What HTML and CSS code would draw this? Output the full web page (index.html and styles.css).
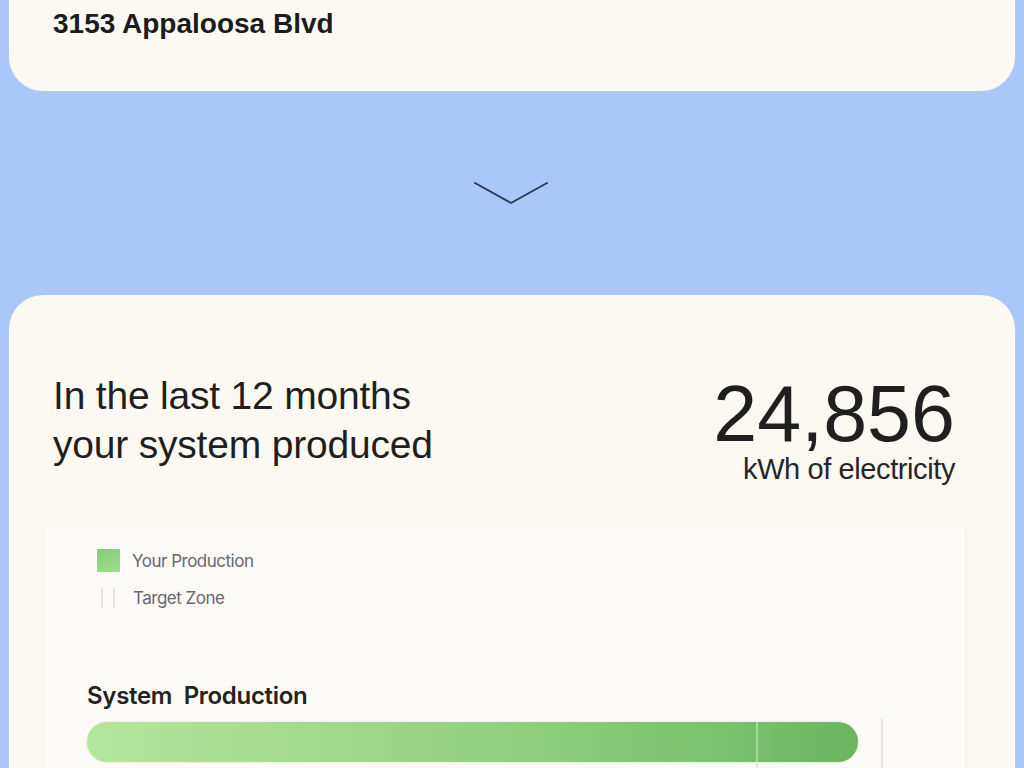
FILE: index.html
```html
<!DOCTYPE html>
<html>
<head>
  <title>Solar Summary</title>
  <link rel="stylesheet" href="styles.css">
</head>
<body>
  <!-- Address card (scrolled, top cut off) -->
  <div class="card address-card">
    <div class="address">3153 Appaloosa Blvd</div>
  </div>

  <div class="chevron-row">
    <svg width="78" height="28" viewBox="0 0 78 28">
      <polyline points="2,3 38,23 74,3" fill="none" stroke="#2f3a57" stroke-width="2" stroke-linejoin="round" stroke-linecap="round"/>
    </svg>
  </div>

  <!-- Production card -->
  <div class="card production-card">
    <div class="summary">
      <div class="summary-text">In the last 12 months<br>your system produced</div>
      <div class="summary-total">
        <div class="total-number">24,856</div>
        <div class="total-unit">kWh of electricity</div>
      </div>
    </div>

    <div class="chart-panel">
      <div class="legend">
        <div class="legend-item">
          <span class="swatch"></span>
          <span>Your Production</span>
        </div>
        <div class="legend-item">
          <span class="target-swatch"></span>
          <span>Target Zone</span>
        </div>
      </div>

      <div class="chart-title">System&nbsp; Production</div>
      <div class="track">
        <div class="bar" style="width: 92.2%;"></div>
        <span class="target-line inner" style="left: 80%;"></span>
        <span class="target-line" style="left: 95%;"></span>
      </div>
    </div>
  </div>
</body>
</html>
```

FILE: styles.css
```css
body {
  margin: 0;
  background-color: #a9c7f8;
  font-family: "Liberation Sans", Arial, sans-serif;
  color: #222;
  height: 768px;
  overflow: hidden;
}

.card {
  background-color: #fcf9f3;
  margin: 0 9px;
}

/* Top address card */
.address-card {
  border-radius: 0 0 34px 34px;
  padding: 7px 44px 50px;
}

.address {
  font-size: 28px;
  font-weight: bold;
  line-height: 34px;
  color: #1c1c1c;
}

.chevron-row {
  height: 204px;
  display: flex;
  align-items: center;
  justify-content: center;
}

.chevron-row svg {
  margin-top: 2px;
}

/* Production card */
.production-card {
  border-radius: 34px 34px 0 0;
  padding: 76px 60px 0 44px;
}

.summary {
  display: flex;
  justify-content: space-between;
  align-items: flex-start;
}

.summary-text {
  font-size: 39px;
  line-height: 49px;
  color: #1f1f1f;
  letter-spacing: -0.2px;
}

.summary-total {
  text-align: right;
  margin-top: 4px;
}

.total-number {
  font-size: 79px;
  line-height: 72px;
  padding-top: 3px;
  color: #1f1f1f;
}

.total-unit {
  font-size: 29px;
  line-height: 34px;
  margin-top: 2px;
  color: #262626;
  letter-spacing: -0.4px;
}

/* Chart panel */
.chart-panel {
  margin: 42px -12px 0 -8px;
  padding: 20px 42px 6px;
  background-color: #fdfbf7;
  border-top: 1px solid #fffefb;
  border-right: 2px solid #f6f3ec;
}

.legend {
  padding-left: 10px;
  display: flex;
  flex-direction: column;
  gap: 14px;
  font-family: Inter, "Noto Sans", sans-serif;
  font-size: 17px;
  color: #6b6571;
  letter-spacing: -0.5px;
}

.legend-item {
  display: flex;
  align-items: center;
  gap: 12px;
  height: 23px;
}

.swatch {
  width: 23px;
  height: 23px;
  background: linear-gradient(160deg, #80d170, #a3da92);
}

.target-swatch {
  width: 10px;
  height: 20px;
  margin: 0 6px 0 4px;
  border-left: 2px solid #e6e4e0;
  border-right: 2px solid #e6e4e0;
}

.chart-title {
  margin-top: 72px;
  font-family: Inter, "Noto Sans", sans-serif;
  font-size: 24px;
  font-weight: 600;
  color: #232323;
  letter-spacing: -0.3px;
}

.track {
  position: relative;
  margin-top: 12px;
  height: 40px;
}

.bar {
  height: 40px;
  border-radius: 20px;
  background: linear-gradient(90deg, #b5e69d, #9ad386 45%, #7cc46f 80%, #6db462);
  box-shadow: 0 0 2px rgba(120, 190, 100, 0.4);
}

/* Target zone markers drawn over the bar */
.target-line {
  position: absolute;
  top: -4px;
  bottom: -6px;
  width: 2px;
  background-color: #ebe8e3;
}

.target-line.inner {
  top: 0;
  background-color: rgba(200, 235, 185, 0.6);
}
```
